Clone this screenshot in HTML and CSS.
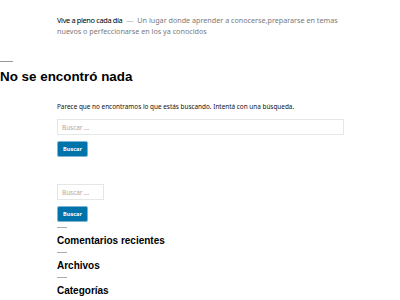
FILE: index.html
```html
<!DOCTYPE html>
<html lang="es">
<head>
    <meta charset="UTF-8">
    <meta name="viewport" content="width=device-width, initial-scale=1.0">
    <title>No se encontró nada</title>
    <link rel="stylesheet" href="styles.css">
</head>
<body>
    <header class="site-header">
        <p class="site-info">
            <span class="site-title">Vive a pleno cada día</span>
            <span class="site-sep">—</span>
            Un lugar donde aprender a conocerse,prepararse en temas nuevos o perfeccionarse en los ya conocidos
        </p>
    </header>

    <main class="content">
        <hr class="rule">
        <h1 class="page-title">No se encontró nada</h1>

        <div class="page-body">
            <p class="intro">Parece que no encontramos lo que estás buscando. Intentá con una búsqueda.</p>
            <form class="search-form wide">
                <input type="search" class="search-field" placeholder="Buscar …">
                <button type="submit" class="search-submit">Buscar</button>
            </form>
        </div>

        <aside class="widgets">
            <form class="search-form narrow">
                <input type="search" class="search-field" placeholder="Buscar …">
                <button type="submit" class="search-submit">Buscar</button>
            </form>

            <div class="widget">
                <hr class="dash">
                <h2 class="widget-title">Comentarios recientes</h2>
            </div>
            <div class="widget">
                <hr class="dash">
                <h2 class="widget-title">Archivos</h2>
            </div>
            <div class="widget">
                <hr class="dash">
                <h2 class="widget-title">Categorías</h2>
            </div>
        </aside>
    </main>
</body>
</html>
```

FILE: styles.css
```css
body {
    margin: 0;
    background-color: #fff;
    color: #000;
    font-family: "Noto Sans", sans-serif;
    overflow: hidden;
}

.site-header {
    padding: 15px 50px 0 57px;
}

.site-info {
    margin: 0;
    font-size: 7.2px;
    line-height: 11px;
    color: #7a7a7a;
}

.site-title {
    color: #000;
    font-size: 7.4px;
    letter-spacing: -0.35px;
}

.site-sep {
    color: #aaa;
    margin: 0 2px;
}

.content {
    padding-top: 24px;
}

.rule {
    margin: 0;
    width: 13px;
    border: 0;
    border-top: 1px solid #999;
}

.page-title {
    margin: 6px 0 0;
    font-family: "Liberation Sans", Arial, sans-serif;
    font-size: 13.4px;
    line-height: 18px;
    font-weight: bold;
}

.page-body {
    padding: 16px 0 0 57px;
}

.intro {
    margin: 0 0 8px;
    font-size: 6.4px;
    line-height: 9px;
    color: #111;
}

.search-form {
    display: flex;
    flex-direction: column;
    align-items: flex-start;
    gap: 6px;
}

.search-field {
    box-sizing: border-box;
    height: 16px;
    margin: 0;
    padding: 0 4px;
    border: 1px solid #e6e6e6;
    font-family: "Noto Sans", sans-serif;
    font-size: 6.4px;
    color: #333;
    background: #fff;
}

.search-field::placeholder {
    color: #aaa;
}

.wide .search-field {
    width: 287px;
}

.narrow .search-field {
    width: 47px;
}

.search-submit {
    box-sizing: border-box;
    width: 31px;
    height: 16px;
    padding: 0;
    border: 1px solid #7fb3d1;
    border-radius: 2px;
    background-color: #0073aa;
    color: #fff;
    font-family: "Noto Sans", sans-serif;
    font-size: 5.6px;
    font-weight: bold;
}

.widgets {
    padding: 27px 0 0 57px;
}

.widget {
    padding-top: 5px;
}

.dash {
    margin: 0;
    width: 10px;
    border: 0;
    border-top: 1px solid #aaa;
}

.widget-title {
    margin: 6px 0 0;
    font-family: "Liberation Sans", Arial, sans-serif;
    font-size: 10px;
    line-height: 13px;
    font-weight: bold;
}
```
